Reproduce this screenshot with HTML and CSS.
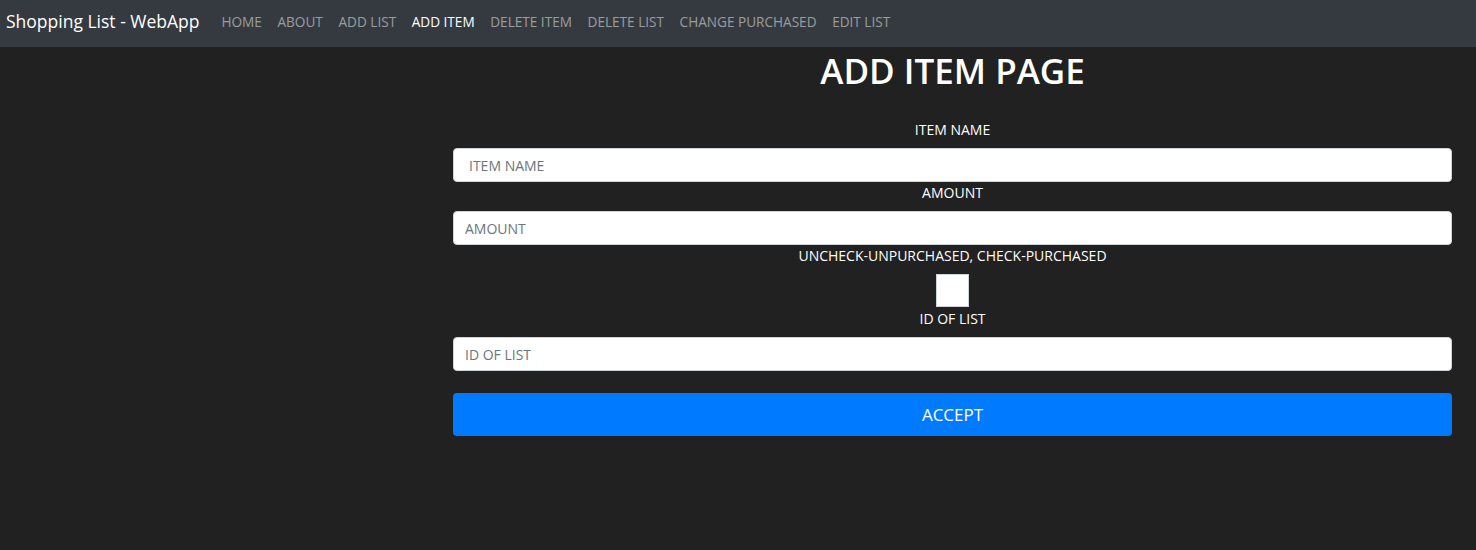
FILE: index.html
```html
<!DOCTYPE html>
<html>
<head>
<meta charset="utf-8">
<link rel="stylesheet" href="styles.css">
</head>
<body>
<nav class="navbar">
  <span class="brand">Shopping List - WebApp</span>
  <ul class="nav-links">
    <li><a href="#">HOME</a></li>
    <li><a href="#">ABOUT</a></li>
    <li><a href="#">ADD LIST</a></li>
    <li><a href="#" class="active">ADD ITEM</a></li>
    <li><a href="#">DELETE ITEM</a></li>
    <li><a href="#">DELETE LIST</a></li>
    <li><a href="#">CHANGE PURCHASED</a></li>
    <li><a href="#">EDIT LIST</a></li>
  </ul>
</nav>
<main class="page">
  <h1 class="title">ADD ITEM PAGE</h1>
  <form class="form">
    <label class="label">ITEM NAME</label>
    <input class="input input-wide" type="text" placeholder="ITEM NAME">
    <label class="label">AMOUNT</label>
    <input class="input" type="text" placeholder="AMOUNT">
    <label class="label">UNCHECK-UNPURCHASED, CHECK-PURCHASED</label>
    <span class="checkbox"></span>
    <label class="label">ID OF LIST</label>
    <input class="input" type="text" placeholder="ID OF LIST">
    <button class="btn" type="button">ACCEPT</button>
  </form>
</main>
</body>
</html>
```
FILE: styles.css
```css
* { box-sizing: border-box; }
html, body { margin: 0; padding: 0; }
body {
  background: #212121;
  font-family: "Open Sans", "Noto Sans", sans-serif;
  color: #fff;
  height: 550px;
}
.navbar {
  height: 47px;
  background: #343a40;
  display: flex;
  align-items: center;
  padding: 0 6px 6px;
}
.brand {
  font-size: 17.5px;
  color: #fff;
  margin-right: 22px;
  white-space: nowrap;
}
.nav-links {
  list-style: none;
  margin: 0;
  padding: 0;
  display: flex;
  gap: 15.6px;
}
.nav-links a {
  font-size: 13.6px;
  color: rgba(255,255,255,0.5);
  text-decoration: none;
  white-space: nowrap;
}
.nav-links a.active { color: #fff; }
.page {
  margin-left: 453px;
  width: 999px;
  display: flex;
  flex-direction: column;
}
.title {
  margin: 0;
  height: 73px;
  padding-top: 2px;
  text-align: center;
  font-size: 35px;
  font-weight: 600;
  line-height: 44px;
}
.form {
  display: flex;
  flex-direction: column;
}
.label {
  text-align: center;
  font-size: 14px;
  line-height: 20px;
  padding-bottom: 1px;
  margin-bottom: 7px;
}
.input {
  height: 34px;
  border: 1px solid #ced4da;
  border-radius: 4px;
  background: #fff;
  font-family: inherit;
  font-size: 14px;
  padding: 0 11px;
  margin-bottom: 1px;
}
.input::placeholder { color: #6c757d; }
.input-wide { padding-left: 15px; }
.checkbox {
  align-self: center;
  width: 33px;
  height: 33px;
  background: #fff;
  border: 1px solid #ced4da;
  margin-bottom: 2px;
}
.btn {
  margin-top: 21px;
  height: 43px;
  background: #007bff;
  color: #fff;
  border: none;
  border-radius: 4px;
  font-family: inherit;
  font-size: 17px;
}
```
